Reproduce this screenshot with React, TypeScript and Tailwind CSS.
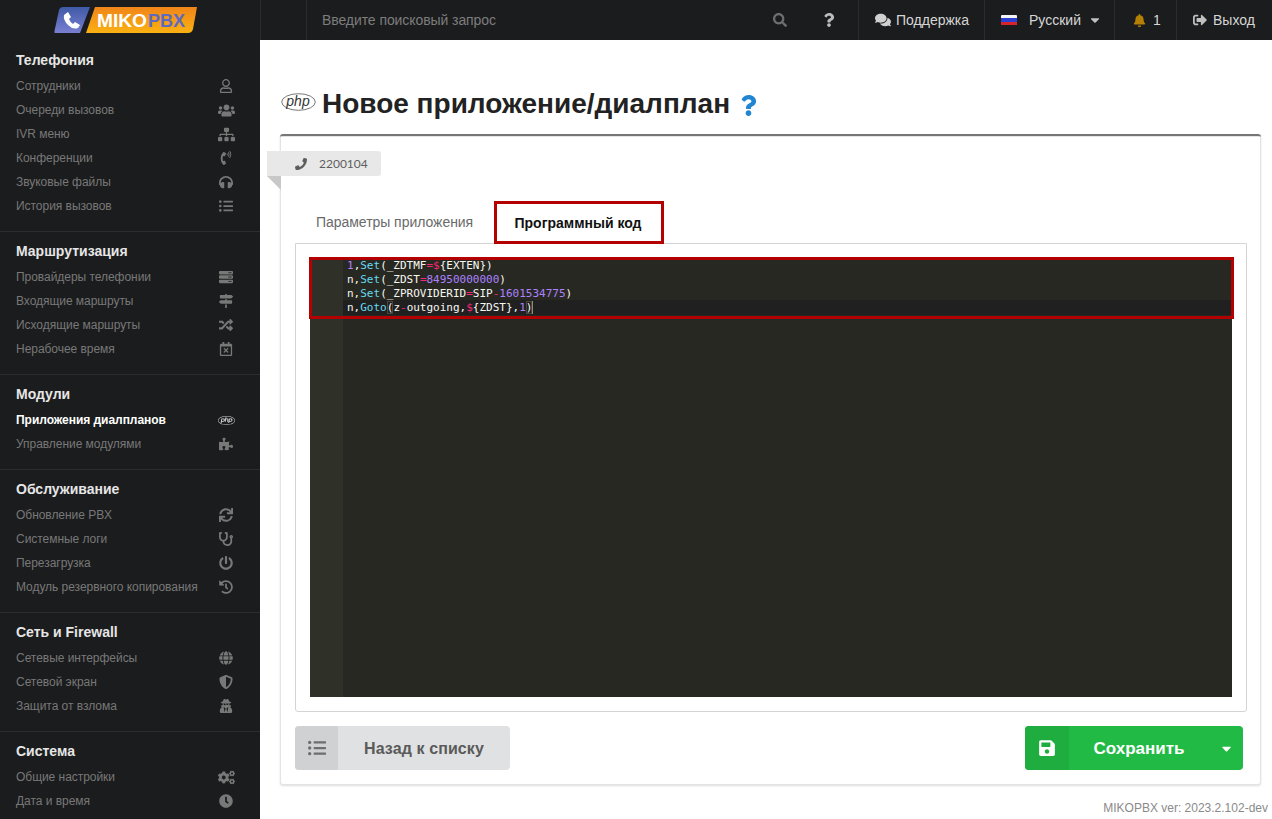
import type { IconType } from "react-icons";
import {
  FaBell,
  FaCaretDown,
  FaClock,
  FaCogs,
  FaComments,
  FaGlobe,
  FaHeadphones,
  FaHistory,
  FaListUl,
  FaMapSigns,
  FaPhone,
  FaPhoneVolume,
  FaPhp,
  FaPowerOff,
  FaPuzzlePiece,
  FaQuestion,
  FaRandom,
  FaRegCalendarTimes,
  FaRegUser,
  FaSave,
  FaSearch,
  FaServer,
  FaShieldAlt,
  FaSignOutAlt,
  FaSitemap,
  FaStethoscope,
  FaSync,
  FaUserSecret,
  FaUsers,
} from "react-icons/fa";

type Item = { label: string; icon: IconType; wide?: boolean; active?: boolean };

const sections: { title: string; items: Item[] }[] = [
  {
    title: "Телефония",
    items: [
      { label: "Сотрудники", icon: FaRegUser },
      { label: "Очереди вызовов", icon: FaUsers, wide: true },
      { label: "IVR меню", icon: FaSitemap, wide: true },
      { label: "Конференции", icon: FaPhoneVolume },
      { label: "Звуковые файлы", icon: FaHeadphones },
      { label: "История вызовов", icon: FaListUl },
    ],
  },
  {
    title: "Маршрутизация",
    items: [
      { label: "Провайдеры телефонии", icon: FaServer },
      { label: "Входящие маршруты", icon: FaMapSigns },
      { label: "Исходящие маршруты", icon: FaRandom },
      { label: "Нерабочее время", icon: FaRegCalendarTimes },
    ],
  },
  {
    title: "Модули",
    items: [
      { label: "Приложения диалпланов", icon: FaPhp, wide: true, active: true },
      { label: "Управление модулями", icon: FaPuzzlePiece },
    ],
  },
  {
    title: "Обслуживание",
    items: [
      { label: "Обновление PBX", icon: FaSync },
      { label: "Системные логи", icon: FaStethoscope },
      { label: "Перезагрузка", icon: FaPowerOff },
      { label: "Модуль резервного копирования", icon: FaHistory },
    ],
  },
  {
    title: "Сеть и Firewall",
    items: [
      { label: "Сетевые интерфейсы", icon: FaGlobe },
      { label: "Сетевой экран", icon: FaShieldAlt },
      { label: "Защита от взлома", icon: FaUserSecret },
    ],
  },
  {
    title: "Система",
    items: [
      { label: "Общие настройки", icon: FaCogs, wide: true },
      { label: "Дата и время", icon: FaClock },
    ],
  },
];

const Logo = () => (
  <svg width="144" height="27" viewBox="0 0 144 27" className="block">
    <defs>
      <linearGradient id="logoBlue" x1="0" y1="0" x2="0" y2="1">
        <stop offset="0" stopColor="#3f5aa6" />
        <stop offset="1" stopColor="#7a7fd0" />
      </linearGradient>
      <linearGradient id="logoOrange" x1="0" y1="0" x2="0" y2="1">
        <stop offset="0" stopColor="#f08519" />
        <stop offset="1" stopColor="#fab112" />
      </linearGradient>
    </defs>
    <path d="M5 3 Q6 0 9 0 H36 L26 26 H1 Q0 26 0.5 24 Z" fill="url(#logoBlue)" />
    <path d="M41 0 H143 L139 22 Q138 26 134 26 H32 Z" fill="url(#logoOrange)" />
    <path
      d="M10 8 L14 5 L17 10 L15 12 Q16 15 19 17 L21 15 L26 18 L24 21 Q19 23 14 18 Q9 13 10 8 Z"
      fill="#fff"
    />
    <text
      x="43"
      y="20"
      fontFamily="'Liberation Sans', sans-serif"
      fontWeight="700"
      fontSize="19"
      fill="#fff"
      textLength="50"
      lengthAdjust="spacingAndGlyphs"
    >
      MIKO
    </text>
    <text
      x="94"
      y="20"
      fontFamily="'Liberation Sans', sans-serif"
      fontWeight="700"
      fontSize="19"
      fill="#5c6bc0"
      textLength="37"
      lengthAdjust="spacingAndGlyphs"
    >
      PBX
    </text>
  </svg>
);

const PhpMark = () => (
  <svg width="35" height="18" viewBox="0 0 35 18" className="block">
    <ellipse cx="17.5" cy="9" rx="16.8" ry="8.3" fill="none" stroke="#555" strokeWidth="0.8" />
    <text
      x="17"
      y="13"
      textAnchor="middle"
      fontFamily="'Liberation Sans', sans-serif"
      fontStyle="italic"
      fontSize="14"
      fill="#333"
    >
      php
    </text>
  </svg>
);

const Flag = () => (
  <div className="flex h-[11px] w-[16px] flex-col overflow-hidden rounded-[1px]">
    <div className="h-1/3 bg-[#f5f5f5]" />
    <div className="h-1/3 bg-[#2a3fd0]" />
    <div className="h-1/3 bg-[#d8232a]" />
  </div>
);

const Sidebar = () => (
  <aside className="h-full w-[260px] shrink-0 overflow-hidden bg-[#1b1c1d]">
    <div className="h-[49px] pt-[7px] pl-[54px]">
      <Logo />
    </div>
    {sections.map((section, i) => (
      <div
        key={section.title}
        className={i === sections.length - 1 ? "" : "mb-[8px] border-b border-[#2c2d2e] pb-[13px]"}
      >
        <div className="flex h-[22px] items-center pl-4 text-[14px] font-bold text-[#e6e6e6]">{section.title}</div>
        <div className="mt-[3px]">
          {section.items.map((item) => (
            <div key={item.label} className="flex h-6 items-center justify-between pr-[25px] pl-4 text-[12px] tracking-[-0.04px]">
              <span className={item.active ? "font-bold text-white" : "text-[#787878]"}>{item.label}</span>
              <span className="flex w-[18px] justify-center">
                <item.icon
                  className={
                    item.active
                      ? "text-[17px] text-[#d8d8d8]"
                      : item.wide
                        ? "text-[17px] text-[#787878]"
                        : "text-[14px] text-[#787878]"
                  }
                />
              </span>
            </div>
          ))}
        </div>
      </div>
    ))}
  </aside>
);

const Topbar = () => (
  <header className="flex h-10 shrink-0 items-center bg-[#1b1c1d] text-[14px] text-[#d6d6d6]">
    <div className="h-full w-[47px] border-x border-[#2c2d2e]" />
    <div className="flex-1 pl-[15px] tracking-[-0.08px] text-[#7d7d7d]">Введите поисковый запрос</div>
    <FaSearch className="mr-[35px] text-[14px] text-[#6f6f6f]" />
    <FaQuestion className="mr-[22px] text-[14px] text-[#bdbdbd]" />
    <div className="flex h-full w-[126px] items-center gap-[5px] border-l border-[#2c2d2e] pl-4">
      <FaComments className="text-[16px] text-[#d0d0d0]" />
      <span>Поддержка</span>
    </div>
    <div className="flex h-full w-[130px] items-center border-l border-[#2c2d2e] pl-4">
      <Flag />
      <span className="ml-[12px]">Русский</span>
      <FaCaretDown className="ml-[7px] text-[14px] text-[#c0c0c0]" />
    </div>
    <div className="flex h-full w-[62px] items-center gap-[7px] border-l border-[#2c2d2e] pl-[18px]">
      <FaBell className="text-[13px] text-[#b58105]" />
      <span>1</span>
    </div>
    <div className="flex h-full w-[96px] items-center gap-[6px] border-l border-[#2c2d2e] pl-4">
      <FaSignOutAlt className="text-[14px] text-[#c0c0c0]" />
      <span>Выход</span>
    </div>
  </header>
);

const p = "text-[#f92672]";
const c = "text-[#66d9ef]";
const n = "text-[#ae81ff]";

const CodeEditor = () => (
  <div className="relative h-[439px] bg-[#272822]">
    <div className="absolute top-0 bottom-0 left-0 w-[33px] bg-[#2f3129]" />
    <div className="absolute top-[42px] right-0 left-[33px] h-[15px] bg-[#202020]" />
    <pre className="relative pt-[1px] pl-[37px] font-['DejaVu_Sans_Mono',monospace] text-[11px] leading-[14px] text-[#f8f8f2]">
      <div>
        <span className={n}>1</span>,<span className={c}>Set</span>(_ZDTMF<span className={p}>=$</span>
        {"{EXTEN})"}
      </div>
      <div>
        n,<span className={c}>Set</span>(_ZDST<span className={p}>=</span>
        <span className={n}>84950000000</span>)
      </div>
      <div>
        n,<span className={c}>Set</span>(_ZPROVIDERID<span className={p}>=</span>SIP<span className={p}>-</span>
        <span className={n}>1601534775</span>)
      </div>
      <div>
        n,<span className={c}>Goto</span>
        <span className="outline-1 -outline-offset-1 outline-[#49483e]">(</span>z<span className={p}>-</span>outgoing,
        <span className={p}>$</span>
        {"{ZDST},"}
        <span className={n}>1</span>
        <span className="outline-1 -outline-offset-1 outline-[#49483e]">)</span>
        <span className="border-l border-[#8a8a80]" />
      </div>
    </pre>
    <div className="absolute -top-px -right-[2px] -left-px h-[62px] border-[3px] border-[#b30000]" />
  </div>
);

const Card = () => (
  <div className="relative h-[651px] rounded-[3px] border-t-2 border-[#767676] bg-white pr-[14px] pl-[15px] shadow-[inset_0_0_0_1px_rgba(34,36,38,0.12),0_1px_2px_0_rgba(34,36,38,0.15)]">
    <div className="absolute top-[15px] -left-[13px]">
      <div className="flex h-[25px] w-[114px] items-center gap-[12px] rounded-r-[3px] bg-[#e8e8e8] pl-[28px] font-['Lato',sans-serif] text-[12px] text-[#5e5e5e]">
        <FaPhone className="text-[12px] text-[#5e5e5e]" />
        <span>2200104</span>
      </div>
      <div className="h-0 w-0 border-t-[14px] border-l-[14px] border-t-[#c8c8c8] border-l-transparent" />
    </div>
    <div className="flex h-[107px] items-end">
      <div className="flex h-[42px] w-[199px] items-center pt-px pl-[21px] text-[14px] tracking-[-0.04px] text-[#6a6a6a]">
        Параметры приложения
      </div>
      <div className="relative z-10 -mb-px flex h-[43px] w-[170px] items-center justify-center border-[3px] border-[#b30000] pt-px pr-[2px] text-[14px] font-bold text-[#111]">
        Программный код
      </div>
    </div>
    <div className="rounded-b-[3px] border border-[#d4d4d5] px-[14px] py-[14px]">
      <CodeEditor />
    </div>
    <div className="mt-[14px] flex justify-between pr-[4px]">
      <div className="flex h-11 w-[215px] overflow-hidden rounded-[4px] bg-[#e0e1e2]">
        <div className="flex w-[43px] items-center justify-center bg-[#d0d1d2]">
          <FaListUl className="text-[18px] text-[#6e6e6e]" />
        </div>
        <div className="flex flex-1 items-center justify-center pt-px text-[16px] font-bold tracking-[0.1px] text-[#5a5a5a]">
          Назад к списку
        </div>
      </div>
      <div className="flex h-11 w-[218px] overflow-hidden rounded-[4px] bg-[#21ba45] text-white">
        <div className="flex w-[44px] items-center justify-center bg-[#1fad40]">
          <FaSave className="text-[18px]" />
        </div>
        <div className="flex flex-1 items-center justify-center pt-px text-[17px] font-bold">Сохранить</div>
        <div className="flex w-[34px] items-center justify-center">
          <FaCaretDown className="text-[15px]" />
        </div>
      </div>
    </div>
  </div>
);

export default function App() {
  return (
    <div className="flex h-screen overflow-hidden bg-white font-['Liberation_Sans',sans-serif]">
      <Sidebar />
      <div className="flex min-w-0 flex-1 flex-col">
        <Topbar />
        <main className="flex-1 pr-[11px] pl-[20px]">
          <div className="flex h-[94px] items-end gap-[7px] pb-[12px]">
            <div className="mb-[11px] ml-[1px]">
              <PhpMark />
            </div>
            <h1 className="-ml-px text-[28px] leading-[36px] font-bold text-[#222]">Новое приложение/диалплан</h1>
            <FaQuestion className="mb-[6px] ml-[1px] text-[21px] text-[#2185d0]" />
          </div>
          <Card />
          <div className="mt-[15px] -mr-[7px] text-right text-[12px] leading-[16px] text-[#8a8a8a]">
            MIKOPBX ver: 2023.2.102-dev
          </div>
        </main>
      </div>
    </div>
  );
}
